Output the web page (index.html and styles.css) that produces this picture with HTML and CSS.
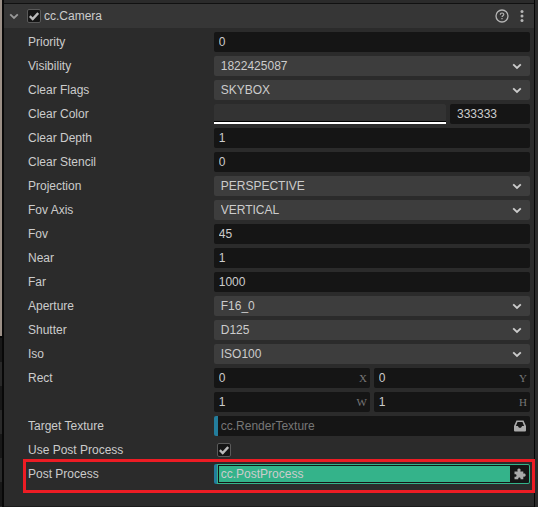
FILE: index.html
```html
<!DOCTYPE html>
<html lang="en">
<head>
<meta charset="utf-8">
<title>Inspector</title>
<link rel="stylesheet" href="styles.css">
</head>
<body>
<svg class="defs" aria-hidden="true">
  <symbol id="chevron" viewBox="0 0 10 7"><path d="M1.200 1.300 5 5l3.800-3.700" fill="none" stroke="currentColor" stroke-width="1.800"/></symbol>
  <symbol id="check" viewBox="0 0 10 10"><path d="M.8 5.200 3.700 8 9.200 2" fill="none" stroke="currentColor" stroke-width="2.400"/></symbol>
</svg>
<div class="app">
  <div class="scene-edge"><div class="viewport"></div><div class="tree"></div></div>
  <main class="inspector">
    <header class="head">
      <svg class="fold"><use href="#chevron"/></svg>
      <span class="tick"><input type="checkbox" id="enabled" checked><svg><use href="#check"/></svg></span>
      <label class="title" for="enabled">cc.Camera</label>
      <button class="icon" aria-label="Help"><svg width="14" height="14" viewBox="0 0 14 14" fill="none" stroke="currentColor"><circle cx="7" cy="7" r="6" stroke-width="1.300"/><path d="M5.300 5.700c0-2.200 3.500-2.200 3.500-.2C8.800 6.700 7 6.700 7 8.100M7 9v1.300" stroke-width="1.200"/></svg></button>
      <button class="icon" aria-label="More"><svg width="4" height="12" viewBox="0 0 4 12" fill="currentColor"><circle cx="2" cy="1.500" r="1.500"/><circle cx="2" cy="6" r="1.500"/><circle cx="2" cy="10.500" r="1.500"/></svg></button>
    </header>
    <section class="props">
      <div class="row"><label for="priority">Priority</label><input class="text" id="priority" value="0"></div>
      <div class="row"><label for="visibility">Visibility</label><div class="drop"><select id="visibility"><option>1822425087</option></select><svg><use href="#chevron"/></svg></div></div>
      <div class="row"><label for="flags">Clear Flags</label><div class="drop"><select id="flags"><option>SKYBOX</option></select><svg><use href="#chevron"/></svg></div></div>
      <div class="row"><label for="color">Clear Color</label><div class="color"><button class="swatch" aria-label="Pick color"></button><input class="text hex" id="color" value="333333"></div></div>
      <div class="row"><label for="depth">Clear Depth</label><input class="text" id="depth" value="1"></div>
      <div class="row"><label for="stencil">Clear Stencil</label><input class="text" id="stencil" value="0"></div>
      <div class="row"><label for="projection">Projection</label><div class="drop"><select id="projection"><option>PERSPECTIVE</option></select><svg><use href="#chevron"/></svg></div></div>
      <div class="row"><label for="axis">Fov Axis</label><div class="drop"><select id="axis"><option>VERTICAL</option></select><svg><use href="#chevron"/></svg></div></div>
      <div class="row"><label for="fov">Fov</label><input class="text" id="fov" value="45"></div>
      <div class="row"><label for="near">Near</label><input class="text" id="near" value="1"></div>
      <div class="row"><label for="far">Far</label><input class="text" id="far" value="1000"></div>
      <div class="row"><label for="aperture">Aperture</label><div class="drop"><select id="aperture"><option>F16_0</option></select><svg><use href="#chevron"/></svg></div></div>
      <div class="row"><label for="shutter">Shutter</label><div class="drop"><select id="shutter"><option>D125</option></select><svg><use href="#chevron"/></svg></div></div>
      <div class="row"><label for="iso">Iso</label><div class="drop"><select id="iso"><option>ISO100</option></select><svg><use href="#chevron"/></svg></div></div>
      <div class="row"><label for="rx">Rect</label>
        <div class="rect">
          <div class="axis"><input id="rx" value="0"><label for="rx">X</label></div>
          <div class="axis"><input id="ry" value="0"><label for="ry">Y</label></div>
          <div class="axis"><input id="rw" value="1"><label for="rw">W</label></div>
          <div class="axis"><input id="rh" value="1"><label for="rh">H</label></div>
        </div>
      </div>
      <div class="row"><label for="target">Target Texture</label>
        <div class="asset"><input id="target" placeholder="cc.RenderTexture"><button aria-label="Choose texture"><svg width="12" height="12" viewBox="0 0 12 12" fill="currentColor"><path fill-rule="evenodd" d="M2.500.5h7L12 6v4.500q0 1-1 1H1q-1 0-1-1V6zM3.500 2 1.900 6h2L5 7.800h2L8.100 6h2L8.500 2z"/></svg></button></div>
      </div>
      <div class="row"><label for="usepost">Use Post Process</label><span class="tick inset"><input type="checkbox" id="usepost" checked><svg><use href="#check"/></svg></span></div>
      <div class="row marked"><label for="post">Post Process</label>
        <div class="asset active"><input id="post" value="cc.PostProcess"><button aria-label="Choose component"><svg width="12" height="12" viewBox="0 0 12 12" fill="currentColor"><path d="M.5 3.500h3.200C3 1.900 3.500.6 5 .6s2 1.300 1.300 2.900h3v2.300c1.200-.6 2.400-.1 2.400 1.300S10.500 9 9.300 8.400v2.900H6.500c.3-1.200-.3-1.800-1.100-1.800s-1.400.6-1.100 1.800H.5V8.700c1.400.4 2-.3 2-1.200S1.900 6 .5 6.300z"/></svg></button></div>
      </div>
    </section>
  </main>
  <div class="side"></div>
</div>
</body>
</html>
```
FILE: styles.css
```css
* { box-sizing: border-box; }
body {
  margin: 0;
  background: #2b2b2b;
  color: #ccc;
  font: 12px/20px "Liberation Sans", Arial, sans-serif;
}
.defs { position: absolute; width: 0; height: 0; }
.app {
  display: grid;
  grid-template-columns: 4px minmax(0, 1fr) 4px;
  min-height: 100vh;
}
.scene-edge {
  display: grid;
  grid-template-rows: 2fr 1fr;
  border-right: 2px solid #080808;
}
.viewport { background: #9c9087; border-bottom: 2px solid #080808; }
.tree { background: repeating-linear-gradient(#181818 0 24px, #292929 24px 48px); }
.side { background: #2b2b2b; border-left: 1px solid #050505; }
.inspector {
  border-top: 3px solid #2b2b2b;
  border-bottom: 1px solid #1c1c1c;
}
.head {
  display: flex;
  align-items: center;
  height: 25px;
  padding: 0 10px 0 5px;
  border-top: 1px solid #111;
  background: #363636;
}
.fold { width: 10px; height: 7px; color: #999; margin-right: 8px; }
.title { flex: 1; padding-left: 3px; }
button { border: 0; padding: 0; color: #aaa; background: none; }
.icon { display: flex; margin-left: 11px; color: #b5b5b5; }
.tick {
  position: relative;
  width: 14px;
  height: 14px;
}
.tick input {
  display: block;
  appearance: none;
  width: 14px;
  height: 14px;
  margin: 0;
  border: 1px solid #5a5a5a;
  border-radius: 2px;
  background: #151515;
}
.tick svg {
  position: absolute;
  inset: 2px;
  width: 10px;
  height: 10px;
  color: #bbb;
  pointer-events: none;
}
.inset { margin: 3px; }
.props {
  display: grid;
  gap: 4px;
  padding: 4px 4px 20px 24px;
}
.row {
  position: relative;
  display: grid;
  grid-template-columns: 37% minmax(0, 1fr);
}
input, select {
  min-width: 0;
  width: 100%;
  height: 20px;
  border: 0;
  border-radius: 2px;
  outline: 0;
  color: #ccc;
  font: inherit;
}
.text { padding: 0 5px; background: #151515; }
.drop { position: relative; height: 20px; }
.drop select { display: block; appearance: none; padding: 0 7px; background: #3d3d3d; }
.drop svg {
  position: absolute;
  right: 8px;
  top: 7px;
  width: 10px;
  height: 7px;
  pointer-events: none;
}
.color { display: grid; grid-template-columns: minmax(0, 1fr) 80px; gap: 4px; }
.swatch {
  border-bottom: 2px solid #fff;
  border-radius: 2px 2px 0 0;
  background: #333;
  box-shadow: inset 0 -1px #000;
}
.text.hex { padding: 0 7px; }
.rect { display: grid; grid-template-columns: 1fr 1fr; gap: 4px; }
.axis { display: flex; padding: 0 3px 0 5px; border-radius: 2px; background: #151515; }
.axis input { flex: 1; padding: 0; background: none; }
.axis label { color: #777; font-family: "Liberation Serif", serif; font-size: 11px; }
.asset {
  display: flex;
  height: 20px;
  border-left: 4px solid #237d9c;
  border-radius: 2px;
  background: #151515;
}
.asset input { flex: 1; padding: 0 3px; background: none; }
.asset input::placeholder { color: #777; opacity: 1; }
.asset button { display: flex; align-items: center; padding-right: 4px; }
.asset.active {
  padding: 1px 0;
  border-left-width: 3px;
  box-shadow: inset 0 0 0 1px #34b38a, inset 0 0 0 2px #151515;
}
.active input { height: 16px; margin: 1px 4px 1px 2px; padding: 0 2px; border-radius: 0; background: #34b38a; }
.marked::after {
  content: "";
  position: absolute;
  inset: -5px -5px -9px;
  border: 3px solid #ed1c24;
  pointer-events: none;
}
```
